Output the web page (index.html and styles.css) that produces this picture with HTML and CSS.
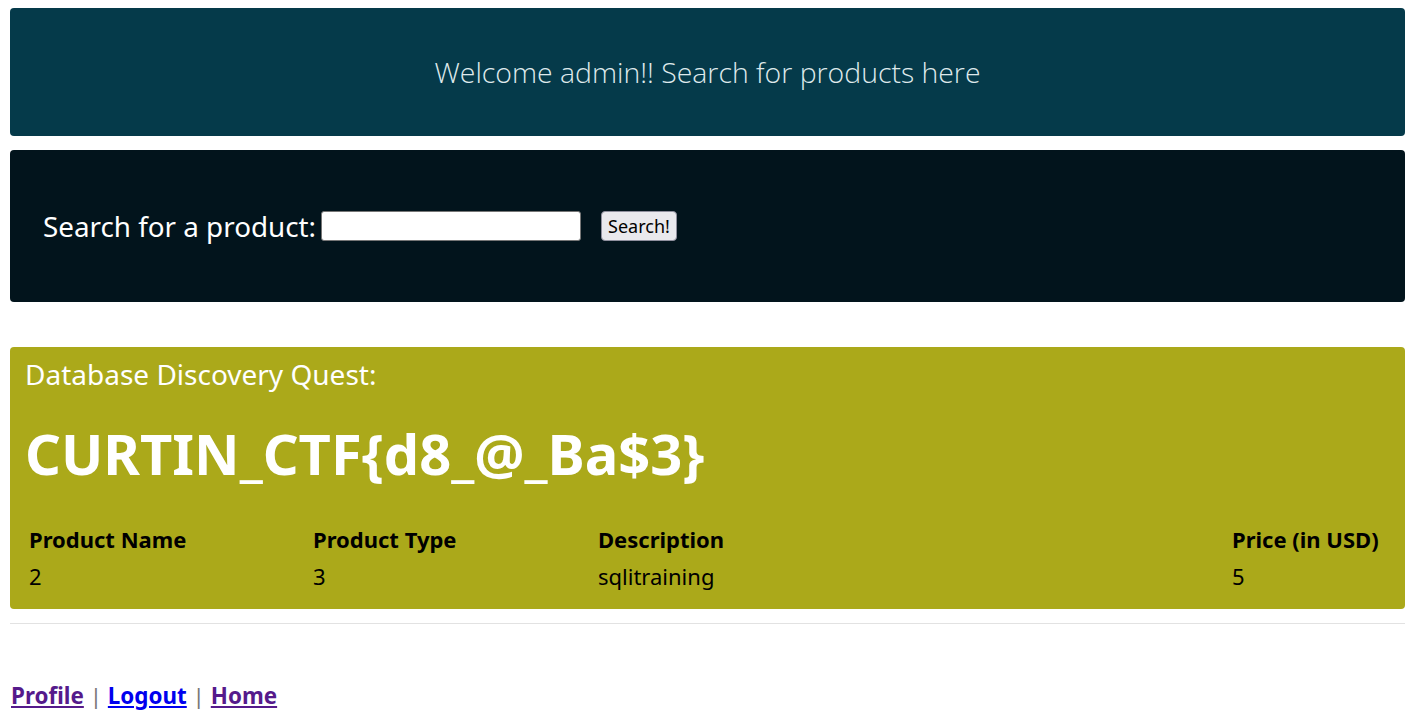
FILE: index.html
```html
<!DOCTYPE html>
<html>
<head>
<meta charset="utf-8">
<link rel="stylesheet" href="styles.css">
</head>
<body>
<div class="page">
  <div class="banner">Welcome admin!! Search for products here</div>
  <form class="search">
    <label class="search-label">Search for a product:</label>
    <input class="search-input" type="text">
    <button class="search-btn" type="button">Search!</button>
  </form>
  <div class="result">
    <div class="quest">Database Discovery Quest:</div>
    <div class="flag">CURTIN_CTF{d8_@_Ba$3}</div>
    <table class="products">
      <colgroup>
        <col class="c1"><col class="c2"><col class="c3"><col class="c4">
      </colgroup>
      <thead>
        <tr><th>Product Name</th><th>Product Type</th><th>Description</th><th>Price (in USD)</th></tr>
      </thead>
      <tbody>
        <tr><td>2</td><td>3</td><td>sqlitraining</td><td>5</td></tr>
      </tbody>
    </table>
  </div>
  <hr class="rule">
  <div class="nav">
    <a class="visited" href="#">Profile</a> <span class="sep">|</span> <a class="link" href="#">Logout</a> <span class="sep">|</span> <a class="visited" href="#">Home</a>
  </div>
</div>
</body>
</html>
```

FILE: styles.css
```css
html, body {
  margin: 0;
  padding: 0;
  background: #ffffff;
  font-family: "Noto Sans", "Open Sans", sans-serif;
  color: #000;
}
.page {
  padding: 8px 14px 0 10px;
}
.banner {
  height: 128px;
  display: flex;
  align-items: center;
  justify-content: center;
  padding-bottom: 1px;
  box-sizing: border-box;
  background: #053a4a;
  color: #dfe9ec;
  border-radius: 4px;
  font-family: "Open Sans", "Noto Sans", sans-serif;
  font-size: 28.4px;
  font-weight: 300;
}
.search {
  margin: 14px 0 0 0;
  height: 152px;
  display: flex;
  align-items: center;
  background: #02141c;
  border-radius: 4px;
  padding-left: 33px;
}
.search-label {
  color: #ffffff;
  font-size: 27.8px;
  margin-right: 5px;
}
.search-input {
  width: 260px;
  height: 30px;
  box-sizing: border-box;
  border: 1px solid #767676;
  border-radius: 3px;
  background: #fff;
  margin: 0;
}
.search-btn {
  margin-left: 20px;
  height: 30px;
  padding: 0 6px;
  font-family: "Noto Sans", sans-serif;
  font-size: 18px;
  background: #e9e9ed;
  border: 1px solid #8f8f9d;
  border-radius: 4px;
  color: #000;
}
.result {
  margin-top: 45px;
  background: #aba91a;
  border-radius: 4px;
  padding: 10px 15px 15px 15px;
}
.quest {
  color: #ffffff;
  font-size: 28px;
  line-height: 34px;
}
.flag {
  color: #ffffff;
  font-size: 56px;
  font-weight: 700;
  line-height: 70px;
  margin-top: 27px;
  margin-bottom: 32px;
}
.products {
  width: 100%;
  border-collapse: collapse;
  table-layout: fixed;
  font-size: 22px;
}
.c1 { width: 284px; }
.c2 { width: 285px; }
.c3 { width: auto; }
.c4 { width: 162px; }
.products th {
  text-align: left;
  font-weight: 700;
  padding: 4px 4px;
  line-height: 30px;
  white-space: nowrap;
}
.products td {
  padding: 3px 4px;
  line-height: 30px;
}
.rule {
  margin: 14px 0 0 0;
  border: 0;
  border-top: 1px solid #e2e2e2;
}
.nav {
  margin-top: 56px;
  padding-left: 1px;
  font-size: 22.4px;
  font-weight: 700;
  color: #777;
}
.visited { color: #551a8b; }
.link { color: #0000ee; }
.sep { font-weight: 400; }
```
